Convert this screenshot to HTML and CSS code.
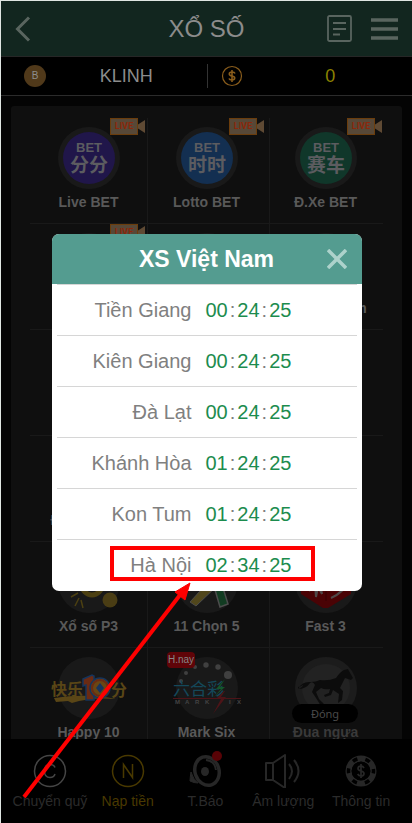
FILE: index.html
```html
<!DOCTYPE html>
<html lang="vi">
<head>
  <meta charset="UTF-8">
  <meta name="viewport" content="width=device-width, initial-scale=1.0">
  <title>Xổ số</title>
  <link rel="stylesheet" href="styles.css">
</head>
<body>
  <div class="app">
    <header class="topbar">
      <button class="icon-btn" aria-label="Quay lại">
        <svg width="16" height="26" viewBox="0 0 16 26" fill="none" stroke="#59655f" stroke-width="3"><path d="M14 1.500 2.500 13 14 24.500"/></svg>
      </button>
      <h1>XỔ SỐ</h1>
      <div class="actions">
        <button class="icon-btn" aria-label="Lịch sử">
          <svg width="25" height="27" viewBox="0 0 25 27" fill="none" stroke="#59655f" stroke-width="1.800"><rect x="1" y="1" width="23" height="25" rx="1.500"/><path d="M6 8h13M6 14h13M6 19.500h7"/></svg>
        </button>
        <button class="icon-btn" aria-label="Menu">
          <svg width="27" height="22" viewBox="0 0 27 22" fill="none" stroke="#59655f" stroke-width="3.500"><path d="M0 2h27M0 11h27M0 20h27"/></svg>
        </button>
      </div>
    </header>

    <div class="account">
      <div class="account-item">
        <span class="coin">B</span>
        <span class="value">KLINH</span>
      </div>
      <div class="account-item money">
        <svg width="22" height="22" viewBox="0 0 22 22" fill="none" stroke="#8a5d1c"><circle cx="11" cy="11" r="9.500" stroke-width="1.200"/><path d="M14 8.500Q13.500 7 11 7 8.300 7 8.300 8.900q0 1.600 2.700 2.100t2.700 2.100Q13.700 15 11 15q-2.500 0-3-1.500M11 5v12" stroke-width="1.600"/></svg>
        <span class="value">0</span>
      </div>
    </div>

    <main>
      <div class="games">
        <a class="game" href="#">
          <b class="live">LIVE</b>
          <svg class="logo" viewBox="0 0 62 62"><circle cx="31" cy="31" r="31" fill="#191919"/><circle cx="31" cy="31" r="26" fill="#20164a"/><text class="bet" x="31" y="25">BET</text><text class="cn" x="31" y="45">分分</text></svg>
          <span>Live BET</span>
        </a>
        <a class="game" href="#">
          <b class="live">LIVE</b>
          <svg class="logo" viewBox="0 0 62 62"><circle cx="31" cy="31" r="31" fill="#191919"/><circle cx="31" cy="31" r="26" fill="#132f51"/><text class="bet" x="31" y="25">BET</text><text class="cn" x="31" y="45">时时</text></svg>
          <span>Lotto BET</span>
        </a>
        <a class="game" href="#">
          <b class="live">LIVE</b>
          <svg class="logo" viewBox="0 0 62 62"><circle cx="31" cy="31" r="31" fill="#191919"/><circle cx="31" cy="31" r="26" fill="#10372a"/><text class="bet" x="31" y="25">BET</text><text class="cn" x="31" y="45">赛车</text></svg>
          <span>Đ.Xe BET</span>
        </a>

        <a class="game" href="#">
          <b class="live">LIVE</b>
          <svg class="logo" viewBox="0 0 62 62"><circle cx="31" cy="31" r="31" fill="#191919"/></svg>
        </a>
        <a class="game" href="#"><svg class="logo" viewBox="0 0 62 62"><circle cx="31" cy="31" r="31" fill="#191919"/></svg></a>
        <a class="game" href="#">
          <svg class="logo" viewBox="0 0 62 62"><circle cx="31" cy="31" r="31" fill="#191919"/></svg>
          <span>XS Việt Nam</span>
        </a>

        <a class="game" href="#"></a>
        <a class="game" href="#"></a>
        <a class="game" href="#"></a>

        <a class="game" href="#">
          <svg class="logo" viewBox="0 0 62 62"><circle cx="31" cy="31" r="31" fill="#191919"/></svg>
          <span>Đua thuyền</span>
        </a>
        <a class="game" href="#"></a>
        <a class="game" href="#"></a>

        <a class="game" href="#">
          <svg class="logo" viewBox="0 0 62 62">
            <circle cx="31" cy="31" r="31" fill="#191919"/>
            <circle cx="34" cy="34" r="10" fill="none" stroke="#4c4012" stroke-width="5"/>
            <circle cx="52" cy="49" r="7.500" fill="#4a3d14"/>
            <path d="M13 46l7-4M17 55l4-8M25 57l-2-8" stroke="#4c4012" stroke-width="1.500"/>
          </svg>
          <span>Xổ số P3</span>
        </a>
        <a class="game" href="#">
          <svg class="logo" viewBox="0 0 62 62">
            <circle cx="31" cy="31" r="31" fill="#191919"/>
            <path d="M38 25 14 51l6 4 24-23z" fill="#51471c" stroke="#4c4c4c"/>
            <path d="M35 25l9 31 8-3-9-29z" fill="#123c22" stroke="#4c4c4c" stroke-width="1.500"/>
          </svg>
          <span>11 Chọn 5</span>
        </a>
        <a class="game" href="#">
          <svg class="logo" viewBox="0 0 62 62">
            <circle cx="31" cy="31" r="31" fill="#191919"/>
            <path d="M6 15 31 3l25 12v28L33 57h-5L6 43z" fill="#4a0305"/>
            <path d="M31 8v42" stroke="#350305"/>
            <path d="M14 40l6-6 1 12 2-10 4 7-2-12M36 47q14-6 17-17-5 12-17 17" fill="none" stroke="#4f4949" stroke-width="2"/>
          </svg>
          <span>Fast 3</span>
        </a>

        <a class="game" href="#">
          <svg class="logo wide" viewBox="0 0 78 62">
            <circle cx="39" cy="31" r="31" fill="#191919"/>
            <path d="M4 41q34-5 62 1-26-2-44 4l-4-2-12 1z" fill="#5a4616"/>
            <text class="brush" x="1" y="38">快乐</text>
            <path d="M33 22l9-4 2 1v24h-8V28l-3 1z" fill="#6a2a13" stroke="#16345c" stroke-width="1.500"/>
            <circle cx="50" cy="31" r="10" fill="#6a4613" stroke="#16345c" stroke-width="1.500"/>
            <circle cx="50" cy="31" r="8" fill="none" stroke="#6a2a13" stroke-width="2"/>
            <path d="M50 26l4 5-4 5-4-5z" fill="#16345c"/>
            <text class="brush" x="61" y="39">分</text>
          </svg>
          <span>Happy 10</span>
        </a>
        <a class="game" href="#">
          <b class="today">H.nay</b>
          <svg class="logo wide" viewBox="0 0 78 62">
            <circle cx="39" cy="31" r="31" fill="#191919"/>
            <g fill="#404040"><circle cx="13" cy="24" r="2"/><circle cx="18" cy="16" r="2"/><circle cx="27" cy="10" r="2"/><circle cx="38" cy="8" r="2.700"/><circle cx="50" cy="10" r="2.700"/><circle cx="60" cy="18" r="4"/></g>
            <text class="six" x="5" y="38">六合彩</text>
            <path d="M5 41.500h68" stroke="#4d1418"/>
            <path d="M56 34l-8 8h5l-8 15 13-17h-5l4-6z" fill="#4d1418"/>
            <path d="M57 22l-9 10h5l-7 8 11-10h-5z" fill="#14562c"/>
            <g class="mini"><text x="7" y="47">M</text><text x="17" y="47">A</text><text x="27" y="47">R</text><text x="37" y="47">K</text><text x="61" y="47">I</text><text x="69" y="47">X</text></g>
          </svg>
          <span>Mark Six</span>
        </a>
        <a class="game closed" href="#">
          <svg class="logo" viewBox="0 0 62 62">
            <circle cx="31" cy="31" r="31" fill="#1c1c1c"/><circle cx="31" cy="31" r="24" fill="#222"/>
            <path d="M3 32q4-8 13-7 5 0 9-2 9 1 16-2 4-6 8-8l4-1 1 2 4 7-2 2-6-2q-3 6-5 10l3 3-1 9-4 3 1-9-6-4-2 5-6 2-1-2 5-2 1-4q-5 1-9-1l-5 4 3 7 6 6-4 1-5-8-4-6 3-7q-2-4-5-2-4 6-12 6 4-1 5-4-3 2-5 2z" fill="#0c0c0c"/>
          </svg>
          <em>Đóng</em>
          <span>Đua ngựa</span>
        </a>
      </div>
    </main>

    <nav class="tabs">
      <a href="#">
        <svg width="34" height="34" viewBox="0 0 34 34" fill="none" stroke="#454545" stroke-width="1.500"><circle cx="17" cy="17" r="15.500"/><path d="M22 13.500Q21 10.500 17 10.500q-5.500 0-5.500 6.500t5.500 6.500q4 0 5-3.500"/></svg>
        Chuyển quỹ
      </a>
      <a class="active" href="#">
        <svg width="34" height="34" viewBox="0 0 34 34" fill="none" stroke="#493900" stroke-width="1.500"><circle cx="17" cy="17" r="15.500"/><path d="M12.500 24V10.500l9 13V10"/></svg>
        Nạp tiền
      </a>
      <a href="#">
        <svg width="34" height="34" viewBox="0 0 34 34" fill="none" stroke="#272727"><ellipse cx="19" cy="17" rx="12" ry="14.500" stroke-width="3.500" transform="rotate(-18 19 17)"/><ellipse cx="17" cy="17.500" rx="4" ry="4.500" fill="#272727" stroke="none"/><path d="M18 6q9 1 10 10" stroke-width="2"/><path d="M3 18q-1 6-1 9 4 2 8 2-5-4-7-11z" fill="#272727"/></svg>
        <i class="dot"></i>
        T.Báo
      </a>
      <a href="#">
        <svg width="36" height="34" viewBox="0 0 36 34" fill="none" stroke="#272727" stroke-width="2" stroke-linejoin="round"><path d="M1 9h7L20 1v33L8 26H1zM8 9v17M24 10q6 7 0 15M29 6q9 11 0 22"/></svg>
        Âm lượng
      </a>
      <a href="#">
        <svg width="34" height="34" viewBox="0 0 34 34" fill="none" stroke="#272727"><circle cx="17" cy="17" r="12.500" stroke-width="6"/><circle cx="17" cy="17" r="12.500" stroke="#000" stroke-width="3.500" stroke-dasharray="5 8.090" stroke-dashoffset="2.500"/><circle cx="17" cy="17" r="8.500" stroke="#000" stroke-width="1.500"/><path d="M20 14q-1-2-3-2-3 0-3 2.500 0 1.800 3 2.500t3 2.500Q20 22 17 22q-2.300 0-3.300-2M17 10v14" stroke-width="1.700"/></svg>
        Thông tin
      </a>
    </nav>

    <div class="overlay">
      <section class="modal" role="dialog" aria-labelledby="modal-title">
        <div class="modal-head">
          <h2 id="modal-title">XS Việt Nam</h2>
          <button class="close" aria-label="Đóng">
            <svg width="20" height="20" viewBox="0 0 20 20" stroke="#add2cb" stroke-width="3.500"><path d="M1 1l18 18M19 1 1 19"/></svg>
          </button>
        </div>
        <div class="modal-body">
          <table>
            <tr><th scope="row">Tiền Giang</th><td><b>00</b>:<b>24</b>:<b>25</b></td></tr>
            <tr><th scope="row">Kiên Giang</th><td><b>00</b>:<b>24</b>:<b>25</b></td></tr>
            <tr><th scope="row">Đà Lạt</th><td><b>00</b>:<b>24</b>:<b>25</b></td></tr>
            <tr><th scope="row">Khánh Hòa</th><td><b>01</b>:<b>24</b>:<b>25</b></td></tr>
            <tr><th scope="row">Kon Tum</th><td><b>01</b>:<b>24</b>:<b>25</b></td></tr>
            <tr><th scope="row">Hà Nội</th><td><b>02</b>:<b>34</b>:<b>25</b></td></tr>
          </table>
        </div>
        <div class="mark"></div>
        <svg class="arrow" width="172" height="220" viewBox="0 0 172 220"><path d="M2 216 158 14" stroke="red" stroke-width="4"/><path d="M168 2 163 19 158 15 153 11z" fill="red" stroke="red" stroke-width="1"/></svg>
      </section>
    </div>
  </div>
</body>
</html>
```
FILE: styles.css
```css
* {
  box-sizing: border-box;
}
body {
  margin: 0;
  background: #040404;
  font-family: Arial, "Liberation Sans", sans-serif;
}
a {
  color: inherit;
  text-decoration: none;
}
button {
  padding: 0;
  border: none;
  background: none;
  cursor: pointer;
}
svg {
  display: block;
}
.app {
  position: relative;
  display: flex;
  flex-direction: column;
  height: 100vh;
  border-top: 1px solid #dfe6e2;
  border-left: 1px solid #dfe6e2;
  overflow: hidden;
}

/* header */
.topbar {
  display: grid;
  grid-template-columns: 1fr auto 1fr;
  align-items: center;
  height: 56px;
  padding: 0 14px;
  background: #12261f;
  border-bottom: 1px solid #262626;
}
.topbar h1 {
  margin: 0;
  font-size: 24px;
  font-weight: 400;
  color: #8c8c8c;
}
.actions {
  display: flex;
  align-items: center;
  justify-content: flex-end;
  gap: 19px;
}
.account {
  display: grid;
  grid-template-columns: 1fr 1fr;
  align-items: center;
  height: 39px;
  background: #000;
  border-bottom: 1px solid #2b2b2b;
}
.account-item {
  display: flex;
  align-items: center;
  height: 24px;
  padding-left: 23px;
  font-size: 18px;
  color: #8c8c8c;
}
.money {
  gap: 6px;
  padding-left: 13px;
  border-left: 1px solid #333;
  color: #8c8200;
}
.coin {
  width: 22px;
  height: 22px;
  border-radius: 50%;
  background: #50391a;
  font-size: 10px;
  line-height: 22px;
  text-align: center;
}
.value {
  flex: 1;
  text-align: center;
}

/* games */
main {
  flex: 1;
  min-height: 0;
  padding: 10px 10px 0;
  overflow: hidden;
}
.games {
  display: grid;
  grid-template-columns: 118fr 122fr 113fr;
  grid-auto-rows: 106px;
  padding: 12px 19px;
  background: #0f0f0f;
  border-radius: 3px;
}
.game {
  position: relative;
  display: flex;
  flex-direction: column;
  align-items: center;
  padding-top: 9px;
  border-right: 1px solid #191919;
  border-bottom: 1px solid #191919;
  font-size: 14px;
  font-weight: 700;
  line-height: 16px;
  color: #595959;
}
.game:nth-child(3n+2) {
  padding-right: 4px;
}
.game:nth-child(3n) {
  padding-right: 2px;
  border-right: none;
}
.game span {
  margin-top: 5px;
  white-space: nowrap;
}
.logo {
  width: 62px;
  height: 62px;
}
.logo.wide {
  width: 78px;
}
.live {
  position: absolute;
  top: 0;
  right: 9px;
  width: 28px;
  height: 17px;
  border: 1px solid #6b3d0c;
  background: #574837;
  font: 700 9px/15px Roboto, sans-serif;
  text-align: center;
  color: #8b280c;
}
.live::after {
  content: "";
  position: absolute;
  top: 1px;
  left: 27px;
  width: 7px;
  height: 13px;
  background: #5f4a34;
  clip-path: polygon(0 35%, 100% 0, 100% 100%, 0 65%);
}
.game:nth-child(3n+2) .live {
  right: 12px;
}
.game:nth-child(3n) .live {
  right: 8px;
}
.bet,
.cn {
  text-anchor: middle;
  font-weight: 700;
  fill: #5c5c60;
}
.bet {
  font-size: 13px;
}
.cn {
  font-family: "Liberation Sans", "Noto Sans CJK SC", sans-serif;
  font-size: 19px;
}
.brush {
  font: 700 16px "Liberation Sans", "Noto Sans CJK SC", sans-serif;
  fill: #5a4616;
}
.six {
  font: 400 17px "Liberation Sans", "Noto Sans CJK SC", sans-serif;
  fill: #14485a;
}
.mini {
  font-size: 6px;
  fill: #444;
}
.today {
  position: absolute;
  top: 4px;
  left: 19px;
  padding: 0 1px;
  border-radius: 4px;
  background: #600408;
  font-size: 10px;
  font-weight: 400;
  color: #858585;
}
.game em {
  position: absolute;
  top: 56px;
  left: 22px;
  width: 66px;
  border-radius: 10px;
  background: #000;
  font: 11px/19px "Noto Sans", sans-serif;
  text-align: center;
  color: #4a4a4a;
}
.closed {
  color: #3a3a3a;
}

/* bottom tabs */
.tabs {
  display: flex;
  height: 84px;
  padding: 15px 12px 0 10px;
  background: #000;
}
.tabs a {
  position: relative;
  display: flex;
  flex: 1;
  flex-direction: column;
  align-items: center;
  gap: 5px;
  font-size: 14px;
  line-height: 16px;
  white-space: nowrap;
  color: #2b2b2b;
}
.tabs .active {
  color: #493900;
}
.dot {
  position: absolute;
  top: -3px;
  right: 22px;
  width: 10px;
  height: 10px;
  border-radius: 50%;
  background: #580306;
}

/* modal */
.overlay {
  position: absolute;
  inset: 0;
  display: flex;
  align-items: center;
  justify-content: center;
  padding: 1px 50px 0;
}
.modal {
  position: relative;
  width: 100%;
  max-width: 310px;
  border-radius: 7px;
  background: #fff;
}
.modal-head {
  display: grid;
  grid-template-columns: 1fr auto 1fr;
  align-items: center;
  height: 50px;
  padding: 0 15px;
  border-radius: 7px 7px 0 0;
  background: #549c90;
}
.modal-head h2 {
  grid-column: 2;
  margin: 0;
  font-size: 23px;
  color: #fff;
}
.close {
  justify-self: end;
}
.modal-body {
  padding: 0 5px 1px;
}
table {
  width: 100%;
  border-collapse: separate;
  border-spacing: 0;
  font-size: 20px;
  color: #808080;
}
th,
td {
  height: 51px;
  padding: 0;
  border-top: 1px solid #d6d6d6;
}
th {
  width: 45%;
  font-weight: 400;
  text-align: right;
}
td {
  padding-left: 14px;
}
td b {
  font-weight: 400;
  color: #1c8c4e;
}
td b + b {
  margin-left: 2px;
}
td b:not(:last-child) {
  margin-right: 2px;
}
.mark {
  position: absolute;
  left: 58px;
  bottom: 10px;
  width: 205px;
  height: 35px;
  border: 4px solid #f00;
}
.arrow {
  position: absolute;
  top: 347px;
  left: -30px;
}
```
